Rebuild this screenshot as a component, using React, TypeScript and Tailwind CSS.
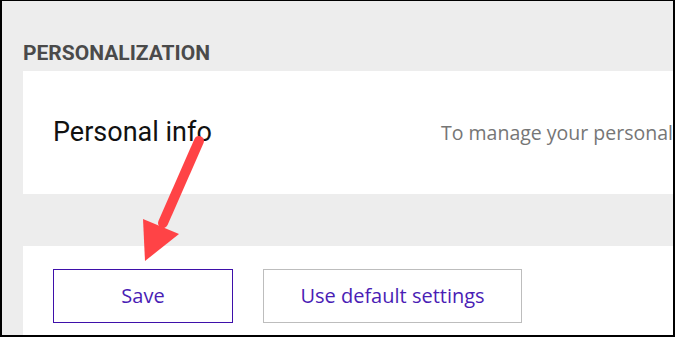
const Arrow = () => (
    <svg
        className="absolute left-0 top-0 pointer-events-none"
        width="675"
        height="337"
        viewBox="0 0 675 337"
    >
        <line x1="197" y1="140" x2="161" y2="222" stroke="#ff4346" strokeWidth="10" strokeLinecap="round" />
        <polygon points="143,260 141,218 177,233" fill="#ff4346" />
    </svg>
);

export default function App() {
    return (
        <div className="relative w-[675px] h-[337px] overflow-hidden bg-[#ededed] border-t border-l-2 border-r-2 border-b-2 border-black">
            {/* Section header */}
            <div className="pl-[21px] pt-[40px] pb-[6px]">
                <h2 className="text-[21px] leading-[24px] font-bold text-[#4a4a4a] font-['Roboto',sans-serif]">
                    PERSONALIZATION
                </h2>
            </div>

            {/* Personal info card */}
            <div className="ml-[21px] h-[123px] bg-white flex items-center pl-[30px] whitespace-nowrap overflow-hidden">
                <div className="w-[388px] shrink-0 text-[27px] text-[#111] font-['Roboto',sans-serif]">
                    Personal info
                </div>
                <div className="text-[19.5px] text-[#767676] font-['Open_Sans',sans-serif]">
                    To manage your personal
                </div>
            </div>

            <div className="h-[52px]" />

            {/* Actions */}
            <div className="ml-[21px] h-[100px] bg-white pt-[23px] pl-[30px] flex gap-[30px] font-['Open_Sans',sans-serif]">
                <button className="w-[180px] h-[54px] border border-[#3e10aa] text-[#4a1db5] text-[20px] bg-white">
                    Save
                </button>
                <button className="w-[259px] h-[54px] border border-[#bdbdbd] text-[#4a1db5] text-[20px] bg-white">
                    Use default settings
                </button>
            </div>

            <Arrow />
        </div>
    );
}
